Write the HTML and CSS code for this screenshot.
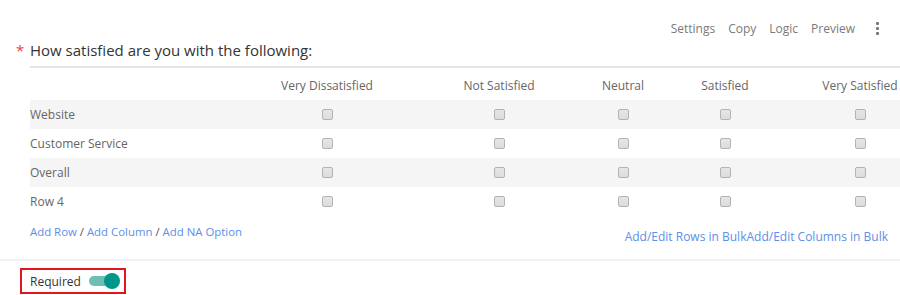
FILE: index.html
```html
<!DOCTYPE html>
<html>
<head>
<meta charset="utf-8">
<link rel="stylesheet" href="styles.css">
</head>
<body>
<div class="page">
  <div class="toolbar">
    <span class="tool">Settings</span>
    <span class="tool">Copy</span>
    <span class="tool">Logic</span>
    <span class="tool">Preview</span>
    <span class="kebab"><i></i><i></i><i></i></span>
  </div>
  <div class="question">
    <span class="star">*</span>
    <h1 class="title">How satisfied are you with the following:</h1>
  </div>
  <div class="matrix-wrap">
    <div class="matrix">
      <div class="row head">
        <div class="label"></div>
        <div class="cell">Very Dissatisfied</div>
        <div class="cell">Not Satisfied</div>
        <div class="cell">Neutral</div>
        <div class="cell">Satisfied</div>
        <div class="cell">Very Satisfied</div>
      </div>
      <div class="row alt">
        <div class="label">Website</div>
        <div class="cell"><span class="cb"></span></div>
        <div class="cell"><span class="cb"></span></div>
        <div class="cell"><span class="cb"></span></div>
        <div class="cell"><span class="cb"></span></div>
        <div class="cell"><span class="cb"></span></div>
      </div>
      <div class="row">
        <div class="label">Customer Service</div>
        <div class="cell"><span class="cb"></span></div>
        <div class="cell"><span class="cb"></span></div>
        <div class="cell"><span class="cb"></span></div>
        <div class="cell"><span class="cb"></span></div>
        <div class="cell"><span class="cb"></span></div>
      </div>
      <div class="row alt">
        <div class="label">Overall</div>
        <div class="cell"><span class="cb"></span></div>
        <div class="cell"><span class="cb"></span></div>
        <div class="cell"><span class="cb"></span></div>
        <div class="cell"><span class="cb"></span></div>
        <div class="cell"><span class="cb"></span></div>
      </div>
      <div class="row">
        <div class="label">Row 4</div>
        <div class="cell"><span class="cb"></span></div>
        <div class="cell"><span class="cb"></span></div>
        <div class="cell"><span class="cb"></span></div>
        <div class="cell"><span class="cb"></span></div>
        <div class="cell"><span class="cb"></span></div>
      </div>
    </div>
  </div>
  <div class="actions">
    <div class="add-links"><a>Add Row</a> / <a>Add Column</a> / <a>Add NA Option</a></div>
    <div class="bulk-links"><a>Add/Edit Rows in Bulk</a><a>Add/Edit Columns in Bulk</a></div>
  </div>
  <div class="footer">
    <div class="required">
      <span>Required</span>
      <span class="toggle"><span class="knob"></span></span>
    </div>
  </div>
</div>
</body>
</html>
```
FILE: styles.css
```css
* { box-sizing: border-box; }
html, body { margin: 0; padding: 0; background: #fff; overflow: hidden; }
body { font-family: "Open Sans", "Noto Sans", sans-serif; color: #666; }
.page { width: 900px; height: 295px; overflow: hidden; }

.toolbar {
  display: flex;
  justify-content: flex-end;
  align-items: center;
  gap: 13px;
  height: 20px;
  margin-top: 18px;
  padding-right: 20px;
  font-size: 12px;
  color: #7a7a7a;
}
.kebab { display: flex; flex-direction: column; gap: 2px; margin-left: 8px; width: 4px; }
.kebab i { display: block; width: 3px; height: 3px; background: #777; border-radius: 1px; }

.question { display: flex; align-items: baseline; padding-left: 16px; margin-top: 1px; }
.star { color: #f03c3c; font-size: 15px; width: 14px; }
.title { margin: 0; font-size: 15px; font-weight: normal; color: #333; line-height: 22px; }

.matrix-wrap { margin-left: 30px; margin-top: 5px; border-top: 2px solid #e6e6e6; width: 870px; overflow: hidden; }
.matrix { width: 901px; }
.row {
  display: grid;
  grid-template-columns: 211px 172px 172px 76px 128px 142px;
  height: 29px;
  align-items: center;
  font-size: 12px;
}
.row.head { height: 32px; padding-top: 2px; color: #666; }
.row.alt { background: #f5f5f5; }
.label { color: #666; }
.cell { display: flex; justify-content: center; white-space: nowrap; }
.cb {
  display: block;
  width: 11px; height: 11px;
  border: 1px solid #b3b3b3;
  border-radius: 2px;
  background: linear-gradient(#e6e6e6, #dcdcdc);
}

.actions { display: flex; justify-content: space-between; padding: 0 12px 0 30px; height: 43px; font-size: 12px; color: #555; }
.actions a { color: #5c8fe6; }
.add-links { padding-top: 8px; font-size: 11.4px; }
.bulk-links { padding-top: 12px; }

.footer { border-top: 2px solid #f2f2f2; padding: 7px 0 0 20px; }
.required {
  display: inline-flex;
  align-items: center;
  gap: 8px;
  height: 26px;
  width: 106px;
  border: 2px solid #e3151f;
  padding-left: 8px;
  font-size: 12px;
  color: #333;
}
.toggle { position: relative; width: 28px; height: 10px; border-radius: 5px; background: #6dbfb3; }
.knob { position: absolute; right: -3px; top: -3px; width: 16px; height: 16px; border-radius: 50%; background: #00968a; }
```
